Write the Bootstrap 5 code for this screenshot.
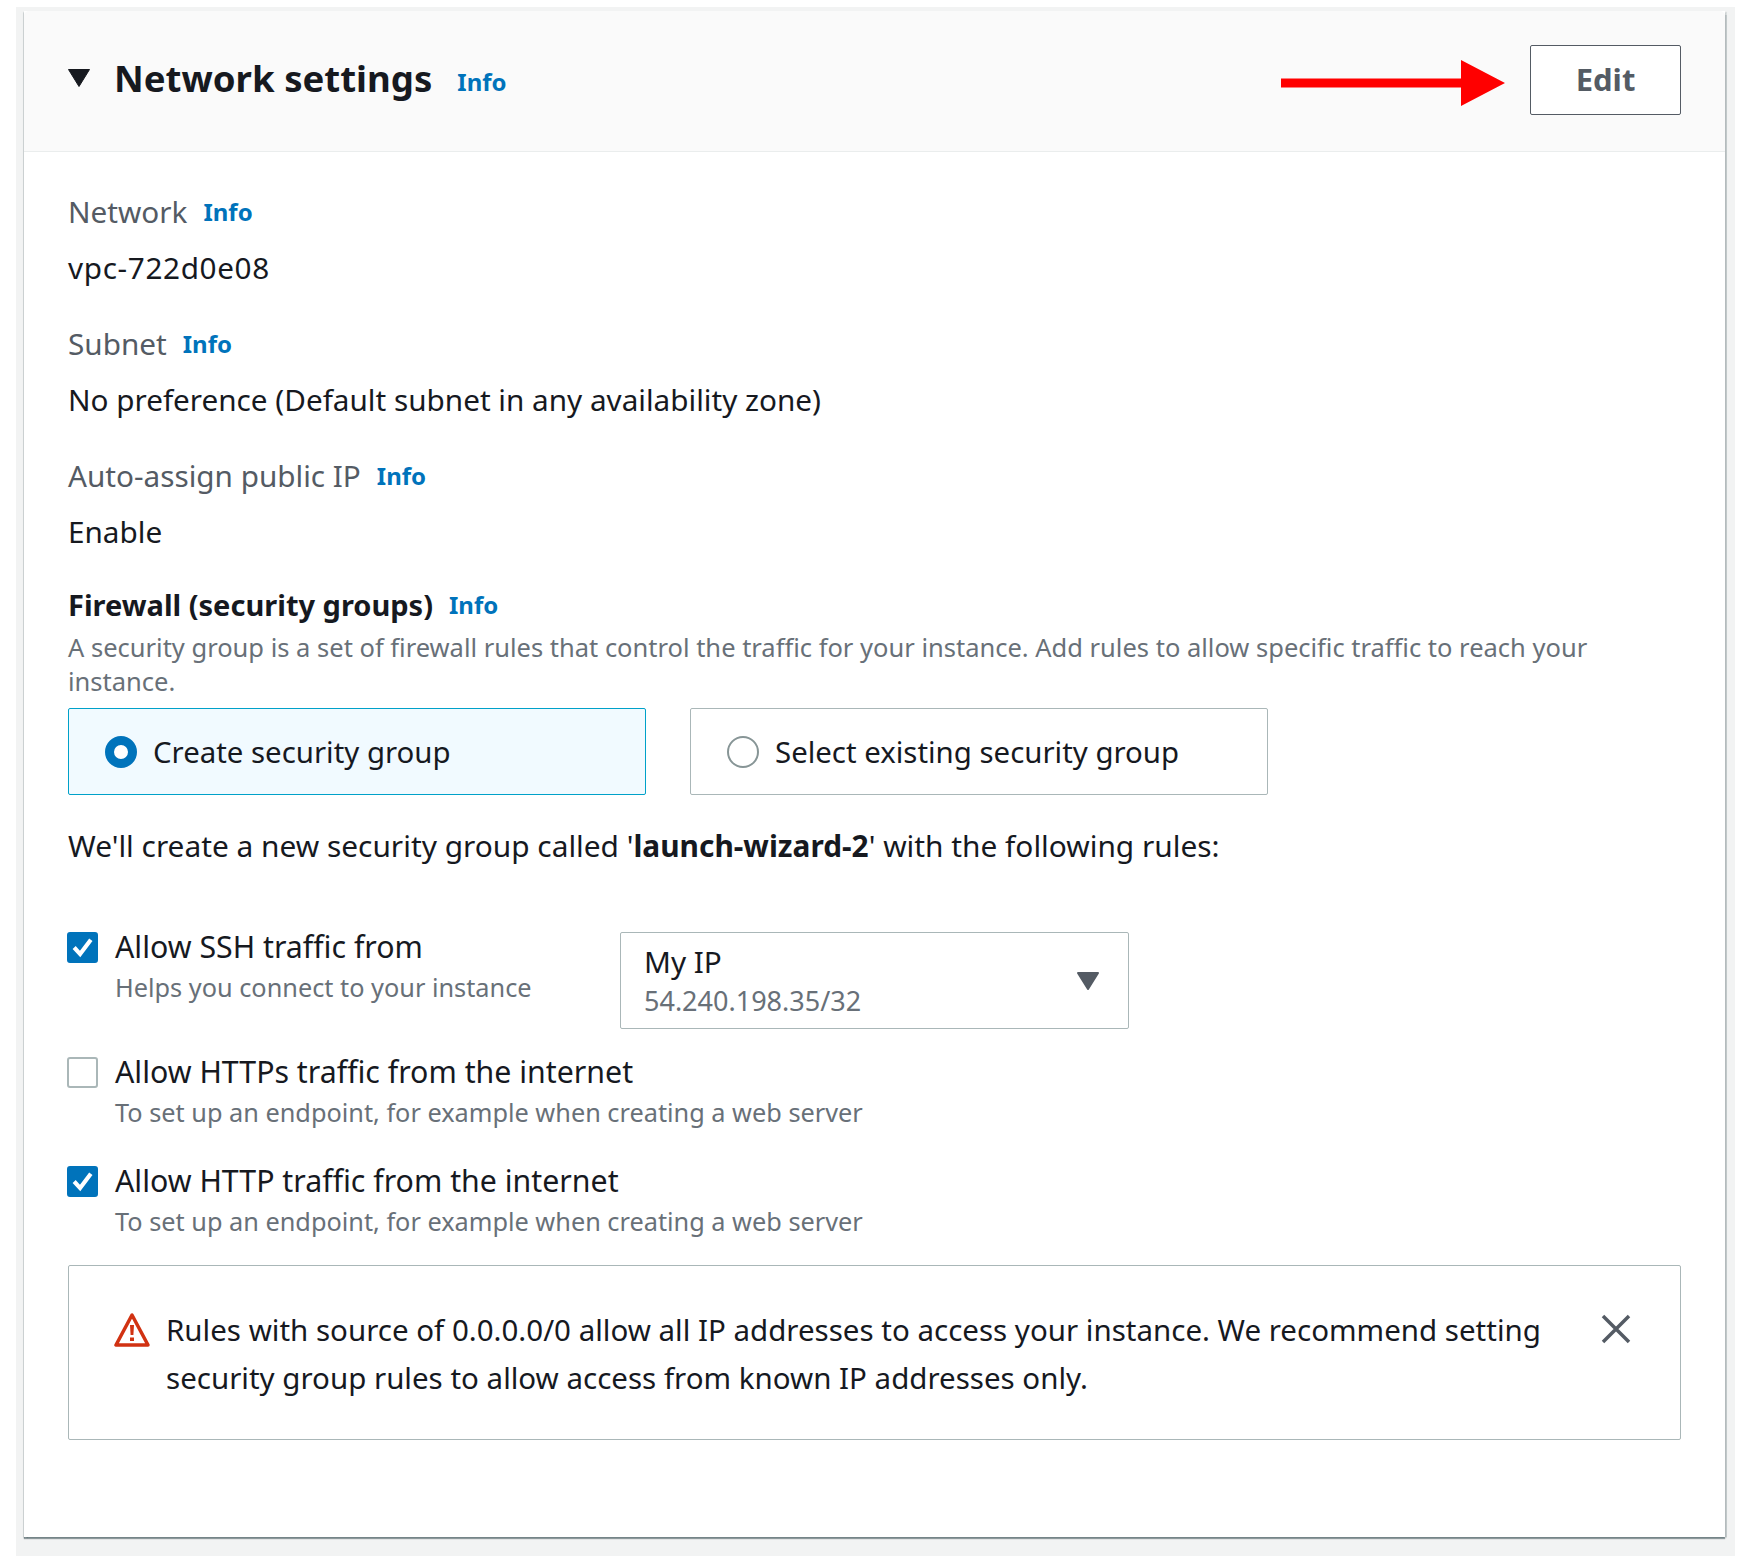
<!DOCTYPE html>
<html lang="en"><head><meta charset="utf-8"><title>Network settings</title>
<link href="https://cdn.jsdelivr.net/npm/bootstrap@5.3.0/dist/css/bootstrap.min.css" rel="stylesheet">
<style>
html,body{background:#fff;margin:0}
body{font-family:"Noto Sans","Open Sans",sans-serif;color:#16191f;font-size:29.7px;line-height:40px;width:1750px;height:1556px;overflow:hidden}
.frame{margin:7px 15px 0 16px;padding:4px 10px 17px 8px;background:#f2f3f3;height:1549px}
.panel{height:1526px;border:0;border-radius:0;box-shadow:0 2px 1px 0 rgba(0,28,36,.4),1.500px 1px 1px 0 rgba(0,28,36,.2),-1.500px 1px 1px 0 rgba(0,28,36,.2);background:#fff}
.panel-head{height:141px;background:#fafafa;border-bottom:1px solid #eaeded;padding:0 44px;border-radius:0}
.ttl{font-size:36.600px;font-weight:700;line-height:44px;margin:0 25px 7px 7px;color:#16191f}
.inf{font-size:24px;font-weight:700;color:#0073bb;text-decoration:none;line-height:30px}
.head-inf{margin-top:2px}
.caret{margin:0 16px 6px -1px;flex:none}
.arr{margin:4px 25px 0 auto;display:block}
.edit-btn{width:151px;height:70px;font-size:31px;font-weight:700;color:#545b64;background:#fff;border:1px solid #545b64;border-radius:2px;padding:0;margin-bottom:3px}
.panel-main{padding:37px 44px 0}
.lbl{color:#545b64;height:46px;line-height:46px}
.val{height:40px;line-height:40px;margin:13px 0 33px}
.val-id{letter-spacing:.65px}
.sec{font-weight:700;font-size:29px;height:40px;margin-top:1px}
.desc{color:#687078;font-size:25.500px;line-height:34px;max-width:1560px;margin-top:5px}
.tiles{gap:44px;margin-top:10px}
.tile{width:578px;height:87px;border:1px solid #aab7b8;border-radius:2px;padding:0 36px;font-size:29.400px}
.tile-on{background:#f1faff;border-color:#00a1c9}
.rad{width:32px;height:32px;border-radius:50%;border:2px solid #879596;background:#fff;flex:none}
.rad-on{border:9px solid #0073bb}
.chk{width:31px;height:31px;border-radius:3px;border:2px solid #aab7b8;background:#fff;flex:none;margin-left:-1px}
.chk-on{background:#0073bb;border-color:#0073bb}
.hint{color:#687078;font-size:25.300px;line-height:34px}
.chk-text{margin-left:17px;margin-top:-5px;font-size:30.300px}
.chk-text .hint{margin-top:3px}
.intro{margin:31px 0 66px;height:40px;font-size:29.850px}
.opt{height:109px}
.opt-first{height:125px}
.opt-last{height:99px}
.ssh-text{width:505px}
.sel{width:509px;height:97px;border:1px solid #aab7b8;border-radius:2px;padding:0 28px 0 23px;background:#fff}
.sel-main{line-height:37px}
.sel-sub{color:#687078;font-size:27px;line-height:36px;margin-top:3px}
.note{height:175px;border:1px solid #aab7b8;border-radius:2px;padding:40px 49px 0 45px;background:#fff;margin:0;color:#16191f;line-height:48px;font-size:29.500px}
.note-text{width:1428px}
.note-ico{margin:6px 16px 0 0;flex:none}
.note-x{margin:8px 0 0 auto;flex:none}
</style></head><body>
<div class="frame">
<div class="card panel">
 <div class="card-header panel-head d-flex align-items-center">
  <svg class="caret" width="24" height="20" viewBox="0 0 24 20"><path d="M1.500 1.500h21L12 18.500z" fill="#16191f" stroke="#16191f" stroke-linejoin="round"/></svg>
  <h2 class="ttl">Network settings</h2>
  <a class="inf head-inf" href="#">Info</a>
  <svg class="arr" width="224" height="46" viewBox="0 0 224 46"><path d="M0 18.500h180V0l44 23-44 23V27.500H0z" fill="#f00"/></svg>
  <button class="btn edit-btn" type="button">Edit</button>
 </div>
 <div class="card-body panel-main">
  <div class="lbl d-flex align-items-center gap-3"><span>Network</span><a class="inf" href="#">Info</a></div>
  <div class="val val-id">vpc-722d0e08</div>
  <div class="lbl d-flex align-items-center gap-3"><span>Subnet</span><a class="inf" href="#">Info</a></div>
  <div class="val">No preference (Default subnet in any availability zone)</div>
  <div class="lbl d-flex align-items-center gap-3"><span>Auto-assign public IP</span><a class="inf" href="#">Info</a></div>
  <div class="val">Enable</div>
  <div class="sec d-flex align-items-center gap-3"><span>Firewall (security groups)</span><a class="inf" href="#">Info</a></div>
  <div class="desc">A security group is a set of firewall rules that control the traffic for your instance. Add rules to allow specific traffic to reach your instance.</div>
  <div class="tiles d-flex">
   <div class="tile tile-on d-flex align-items-center gap-3"><span class="rad rad-on"></span><span>Create security group</span></div>
   <div class="tile d-flex align-items-center gap-3"><span class="rad"></span><span>Select existing security group</span></div>
  </div>
  <div class="intro">We'll create a new security group called '<b>launch-wizard-2</b>' with the following rules:</div>
  <div class="opt opt-first d-flex align-items-start">
   <span class="chk chk-on d-flex align-items-center justify-content-center"><svg width="25" height="25" viewBox="0 0 21 21"><path d="M3.500 10.500l5 5.500 9-12" fill="none" stroke="#fff" stroke-width="3.500"/></svg></span>
   <div class="chk-text ssh-text"><div>Allow SSH traffic from</div><div class="hint">Helps you connect to your instance</div></div>
   <div class="sel d-flex align-items-center justify-content-between">
    <div><div class="sel-main">My IP</div><div class="sel-sub">54.240.198.35/32</div></div>
    <svg width="24" height="20" viewBox="0 0 24 20"><path d="M2 2h20L12 18z" fill="#545b64" stroke="#545b64" stroke-width="2" stroke-linejoin="round"/></svg>
   </div>
  </div>
  <div class="opt d-flex align-items-start">
   <span class="chk"></span>
   <div class="chk-text"><div>Allow HTTPs traffic from the internet</div><div class="hint">To set up an endpoint, for example when creating a web server</div></div>
  </div>
  <div class="opt opt-last d-flex align-items-start">
   <span class="chk chk-on d-flex align-items-center justify-content-center"><svg width="25" height="25" viewBox="0 0 21 21"><path d="M3.500 10.500l5 5.500 9-12" fill="none" stroke="#fff" stroke-width="3.500"/></svg></span>
   <div class="chk-text"><div>Allow HTTP traffic from the internet</div><div class="hint">To set up an endpoint, for example when creating a web server</div></div>
  </div>
  <div class="alert note d-flex align-items-start">
   <svg class="note-ico" width="36" height="36" viewBox="0 0 36 36"><path d="M18 3L2 33h32z" fill="none" stroke="#d13212" stroke-width="3.500" stroke-linejoin="round"/><path d="M16 13h4l-.6 10h-2.800zM16 25.500h4v3.500h-4z" fill="#d13212"/></svg>
   <div class="note-text">Rules with source of 0.0.0.0/0 allow all IP addresses to access your instance. We recommend setting security group rules to allow access from known IP addresses only.</div>
   <svg class="note-x" width="30" height="30" viewBox="0 0 30 30"><path d="M2 2l26 26M28 2L2 28" stroke="#545b64" stroke-width="3.500" fill="none"/></svg>
  </div>
 </div>
</div>
</div>
<script src="https://cdn.jsdelivr.net/npm/bootstrap@5.3.0/dist/js/bootstrap.bundle.min.js"></script>
</body></html>
